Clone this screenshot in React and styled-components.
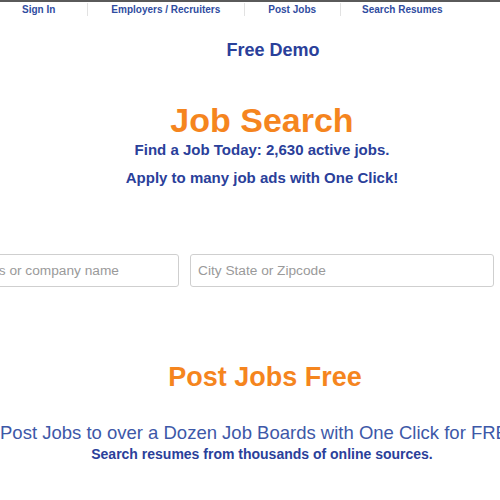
import React from 'react';
import styled, { createGlobalStyle } from 'styled-components';

const GlobalStyle = createGlobalStyle`
  html, body {
    margin: 0;
    padding: 0;
    background: #fff;
    overflow: hidden;
  }
  body {
    font-family: "Liberation Sans", Arial, sans-serif;
  }
`;

const Page = styled.div`
  width: 524px;
  border-top: 2px solid #5a5a5a;
`;

const Nav = styled.ul`
  display: flex;
  list-style: none;
  margin: 0;
  padding: 0 0 0 22px;
  height: 15px;
  align-items: center;
`;

const NavItem = styled.li`
  font-size: 10px;
  font-weight: 700;
  color: #2f4c9f;
  padding: 0 ${p => p.$right}px 0 ${p => p.$left}px;
  border-left: ${p => (p.$first ? 'none' : '1px solid #e2e2e2')};
  line-height: 13px;
`;

const Block = styled.section`
  text-align: center;
`;

const DemoLink = styled.div`
  font-size: 18px;
  font-weight: 700;
  color: #2a409a;
  line-height: 22px;
  margin-top: 22px;
  padding-left: 22px;
`;

const Title = styled.h1`
  margin: 0;
  font-size: 34px;
  font-weight: 700;
  color: #f5851e;
  line-height: 40px;
  margin-top: ${p => p.$top}px;
`;

const SubTitle = styled.h2`
  margin: 0;
  font-size: 27px;
  font-weight: 700;
  color: #f5851e;
  line-height: 30px;
  margin-top: ${p => p.$top}px;
  padding-left: 6px;
`;

const Tagline = styled.p`
  margin: 0;
  font-size: ${p => p.$size || 15}px;
  font-weight: 700;
  color: #2a409a;
  line-height: ${p => p.$lh || 20}px;
  margin-top: ${p => p.$top || 0}px;
`;

const Lead = styled.p`
  margin: 0;
  font-size: 18.5px;
  font-weight: 400;
  color: #3d58a8;
  line-height: 22px;
  white-space: nowrap;
  text-align: left;
  margin-top: 30px;
`;

const SearchRow = styled.form`
  display: flex;
  justify-content: flex-end;
  gap: 11px;
  width: 494px;
  overflow: hidden;
  margin-top: 66px;
`;

const Field = styled.input`
  flex-shrink: 0;
  box-sizing: border-box;
  width: ${p => p.$w}px;
  height: 33px;
  border: 1px solid #cfcfcf;
  border-radius: 3px;
  padding: 0 7px;
  font-family: "Liberation Sans", Arial, sans-serif;
  font-size: 13.7px;
  color: #333;
  background: #fff;
  &::placeholder {
    color: #9a9a9a;
  }
`;

const navLinks = [
  { label: 'Sign In', left: 0, right: 32 },
  { label: 'Employers / Recruiters', left: 23, right: 24 },
  { label: 'Post Jobs', left: 23, right: 24 },
  { label: 'Search Resumes', left: 21, right: 0 },
];

export default function App() {
  return (
    <Page>
      <GlobalStyle />
      <Nav>
        {navLinks.map((l, i) => (
          <NavItem key={l.label} $first={i === 0} $left={l.left} $right={l.right}>
            {l.label}
          </NavItem>
        ))}
      </Nav>
      <Block>
        <DemoLink>Free Demo</DemoLink>
        <Title $top={39}>Job Search</Title>
        <Tagline $top={0}>Find a Job Today: 2,630 active jobs.</Tagline>
        <Tagline $top={8}>Apply to many job ads with One Click!</Tagline>
      </Block>
      <SearchRow onSubmit={e => e.preventDefault()}>
        <Field $w={294} placeholder="Job title, keywords or company name" />
        <Field $w={304} placeholder="City State or Zipcode" />
      </SearchRow>
      <Block>
        <SubTitle $top={75}>Post Jobs Free</SubTitle>
        <Lead>Post Jobs to over a Dozen Job Boards with One Click for FREE</Lead>
        <Tagline $size={14} $lh={18} $top={1}>Search resumes from thousands of online sources.</Tagline>
      </Block>
    </Page>
  );
}
